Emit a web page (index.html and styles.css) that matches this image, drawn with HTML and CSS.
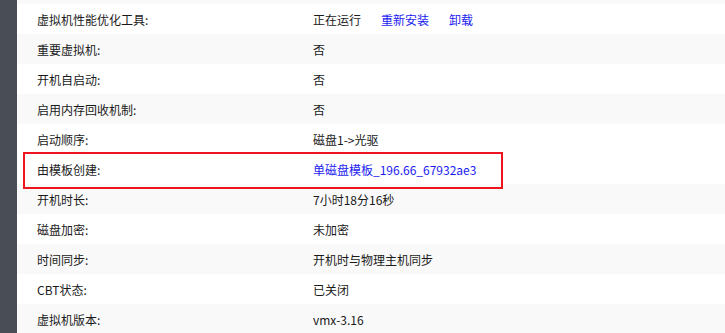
FILE: index.html
```html
<!DOCTYPE html>
<html lang="zh-CN">
<head>
<meta charset="utf-8">
<title>虚拟机详情</title>
<link rel="stylesheet" href="styles.css">
</head>
<body>
<div class="page">
  <aside class="sidebar"></aside>
  <main class="content">
    <div class="table">
      <div class="row"><div class="label">虚拟机性能优化工具:</div><div class="value"><span>正在运行</span><a class="link">重新安装</a><a class="link">卸载</a></div></div>
      <div class="row alt"><div class="label">重要虚拟机:</div><div class="value">否</div></div>
      <div class="row"><div class="label">开机自启动:</div><div class="value">否</div></div>
      <div class="row alt"><div class="label">启用内存回收机制:</div><div class="value">否</div></div>
      <div class="row"><div class="label">启动顺序:</div><div class="value">磁盘1-&gt;光驱</div></div>
      <div class="row marked"><div class="label">由模板创建:</div><div class="value"><a class="link">单磁盘模板_196.66_67932ae3</a></div><div class="mark"></div></div>
      <div class="row alt"><div class="label">开机时长:</div><div class="value">7小时18分16秒</div></div>
      <div class="row"><div class="label">磁盘加密:</div><div class="value">未加密</div></div>
      <div class="row alt"><div class="label">时间同步:</div><div class="value">开机时与物理主机同步</div></div>
      <div class="row"><div class="label">CBT状态:</div><div class="value">已关闭</div></div>
      <div class="row alt"><div class="label">虚拟机版本:</div><div class="value">vmx-3.16</div></div>
    </div>
  </main>
</div>
</body>
</html>
```
FILE: styles.css
```css
html, body {
  margin: 0;
  padding: 0;
  background: #ffffff;
}
body {
  font-family: "Microsoft YaHei", "Noto Sans CJK SC", "Noto Sans", sans-serif;
  font-size: 12px;
  color: #1a1a1a;
  overflow: hidden;
}
.page {
  display: flex;
  width: 725px;
  height: 333px;
}
.sidebar {
  width: 17px;
  flex: none;
  background: #484d56;
}
.content {
  flex: 1;
  background: #f9f9f9;
  padding-top: 4px;
}
.table {
  display: flex;
  flex-direction: column;
}
.row {
  position: relative;
  display: flex;
  align-items: center;
  height: 30px;
  background: #ffffff;
}
.row.alt {
  background: #f9f9f9;
}
.row.marked {
  z-index: 1;
}
.label {
  width: 276px;
  padding-left: 20px;
  flex: none;
}
.value {
  display: flex;
  gap: 20px;
}
.link {
  color: #1c1cf0;
  cursor: pointer;
}
.mark {
  position: absolute;
  left: 6px;
  top: -2px;
  width: 476px;
  height: 33px;
  border: 2px solid #f0141e;
  pointer-events: none;
}
```
